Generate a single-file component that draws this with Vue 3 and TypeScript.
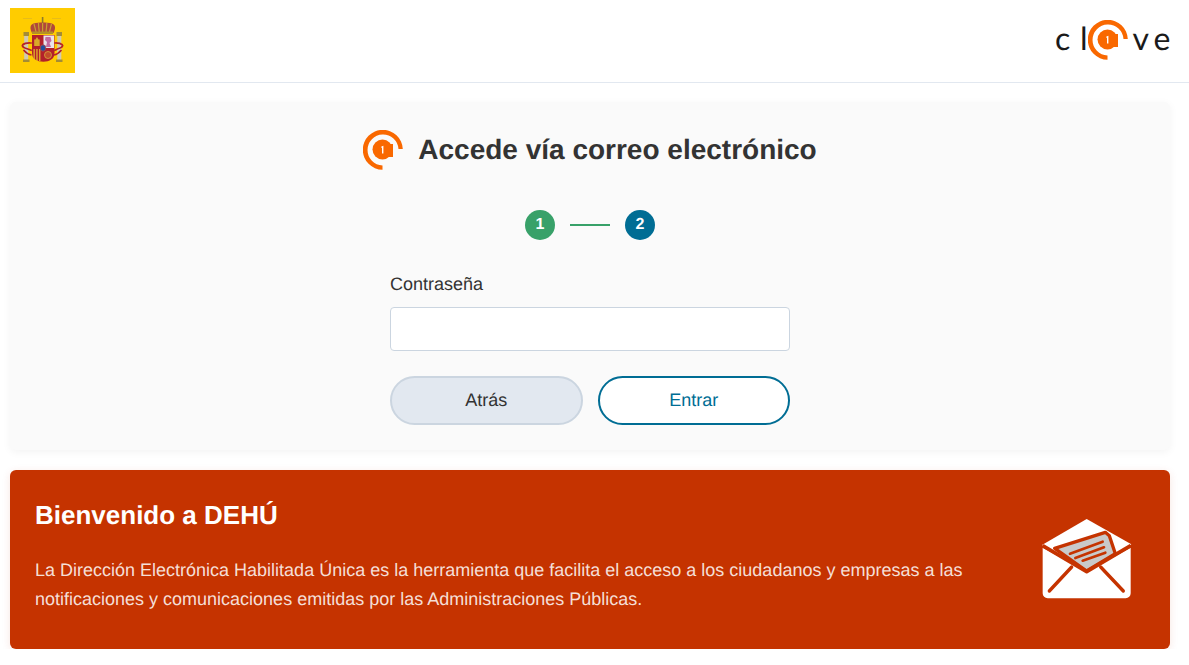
<script setup lang="ts">
const title: string = 'Accede vía correo electrónico'
</script>

<template>
  <div class="page">
    <header class="top">
      <div class="flag">
        <svg class="arms" viewBox="0 0 65 65" width="65" height="65" aria-hidden="true">
          <path d="M13 10.500h9M42 10.500h9" stroke="#c9a83a" stroke-width=".7" opacity=".6" />
          <path d="M32.600 9v6" stroke="#8d7a2c" stroke-width="1.600" />
          <path d="M22 25c-2-4-2.500-8 1.500-9.500 3-1 6-1 9-1s6.500 0 9.500 1c4 1.500 3.500 5.500 1.500 9.500z" fill="#b0483a" />
          <path d="M24 16c.8 3 1.500 5 2 8M32.600 15v9M41.500 16c-.8 3-1.500 5-2 8M28.500 15c0 3 .4 6 .8 9M36.800 15c0 3-.4 6-.8 9" stroke="#c9a030" stroke-width="1.200" fill="none" />
          <path d="M22 23.500h21v2.500H22z" fill="#b39026" />
          <rect x="14.200" y="28" width="4" height="24" fill="#cfcab4" />
          <rect x="47.300" y="28" width="4" height="24" fill="#cfcab4" />
          <path d="M13.500 24h5.500v4h-5.500zM46.500 24h5.500v4h-5.500zM13 51.500h6.500v2.500H13zM46 51.500h6.500v2.500H46z" fill="#a48c35" />
          <path d="M12.300 37c3-2.500 6-2 9.500-2M12.300 37c0 2.500 2 3 4 3.500s4 1.500 5.500 2M13.500 42c2.500 3 5 4.500 8 5M52.700 37c-3-2.500-6-2-8.500-2M52.700 37c0 2.500-2 3-4 3.500s-3 1.500-4.500 2M51.500 42c-2.500 3-4.500 4.500-7.500 5" stroke="#b5232a" stroke-width="1.700" fill="none" />
          <path d="M22 27h22.500v18c0 6-5 8.700-11.200 8.700S22 51 22 45z" fill="#b3202a" />
          <rect x="33.500" y="27.500" width="10.500" height="12.500" fill="#e9e3ea" />
          <path d="M35.500 29h5l1 4-2 2 1.500 4h-5l1-5-2-2z" fill="#c16aa0" />
          <path d="M27 29l1.500 2.500h1.200v6.500h-5.500v-6.500h1.200z" fill="#d9a928" />
          <g fill="#e2b52c">
            <rect x="23.500" y="41" width="1.300" height="10" />
            <rect x="26.300" y="41" width="1.300" height="12" />
            <rect x="29.100" y="41" width="1.300" height="12" />
          </g>
          <circle cx="38" cy="47" r="3.500" fill="#c34a2a" stroke="#d7aa38" stroke-width=".8" />
          <ellipse cx="33" cy="40" rx="2.800" ry="3.200" fill="#214f9d" stroke="#b24742" stroke-width=".8" />
        </svg>
      </div>
      <div class="brand">
        <span class="ch c1">c</span>
        <span class="ch c2">l</span>
        <svg class="mark" viewBox="0 0 40 40" width="40" height="40" aria-hidden="true">
          <path d="M39.800 19H35.500A15.500 15.500 0 1 0 19.500 35.500V39.800A20 20 0 1 1 39.800 19z" fill="#f96800" />
          <circle cx="19.500" cy="19.500" r="10" fill="#f96800" />
          <rect x="19.500" y="14" width="10.500" height="13" fill="#f96800" />
          <path d="M18.400 16.500l2-.8v7.800h-1.400v-5.700l-.6.200z" fill="#fff" />
        </svg>
        <span class="ch c3">v</span>
        <span class="ch c4">e</span>
      </div>
    </header>

    <main class="content">
      <section class="card">
        <div class="heading">
          <svg class="mark" viewBox="0 0 40 40" width="40" height="40" aria-hidden="true">
            <path d="M39.800 19H35.500A15.500 15.500 0 1 0 19.500 35.500V39.800A20 20 0 1 1 39.800 19z" fill="#f96800" />
            <circle cx="19.500" cy="19.500" r="10" fill="#f96800" />
            <rect x="19.500" y="14" width="10.500" height="13" fill="#f96800" />
            <path d="M18.400 16.500l2-.8v7.800h-1.400v-5.700l-.6.200z" fill="#fff" />
          </svg>
          <h1>{{ title }}</h1>
        </div>

        <div class="steps">
          <span class="dot done">1</span>
          <span class="link"></span>
          <span class="dot current">2</span>
        </div>

        <form class="form" @submit.prevent>
          <label for="pw">Contraseña</label>
          <input id="pw" type="password" />
          <div class="actions">
            <button type="button" class="btn back">Atrás</button>
            <button type="submit" class="btn go">Entrar</button>
          </div>
        </form>
      </section>

      <section class="banner">
        <div class="copy">
          <h2>Bienvenido a DEHÚ</h2>
          <p>La Dirección Electrónica Habilitada Única es la herramienta que facilita el acceso a los ciudadanos y empresas a las notificaciones y comunicaciones emitidas por las Administraciones Públicas.</p>
        </div>
        <svg class="mail" viewBox="0 0 390 315" width="130" height="105" aria-hidden="true">
          <path d="M200 42L334 118 200 196 66 120z" fill="#fff" />
          <path d="M68 128L200 200 332 128V265a15 15 0 0 1-15 15H83a15 15 0 0 1-15-15z" fill="#fff" />
          <path d="M104 130L256 82 268 92 286 146 200 198z" fill="#c9c9c9" stroke="#c53300" stroke-width="10" stroke-linejoin="round" />
          <path d="M68 122L200 200 332 122" fill="none" stroke="#c53300" stroke-width="11" stroke-linejoin="round" />
          <path d="M155 186L88 258M242 186L310 258" stroke="#c53300" stroke-width="10" stroke-linecap="round" />
          <path d="M150 146L248 110M166 159L252 127M188 167L256 143" stroke="#c53300" stroke-width="8" stroke-linecap="round" />
        </svg>
      </section>
    </main>
  </div>
</template>

<style>
html, body { margin: 0; background: #fff; }
</style>

<style scoped>
.page {
  font-family: "Liberation Sans", Arial, sans-serif;
  color: #333;
  text-rendering: geometricPrecision;
}
.top {
  display: flex;
  justify-content: space-between;
  align-items: flex-start;
  height: 82px;
  padding: 0 19px 0 10px;
  border-bottom: 1px solid #e2e8f0;
}
.flag {
  width: 65px;
  height: 65px;
  margin-top: 8px;
  background: #ffcc00;
}
.arms { display: block; filter: blur(0.35px); }
.brand {
  display: flex;
  align-items: flex-start;
  width: 115px;
  margin-top: 20px;
  height: 40px;
  font-family: Lato, "Open Sans", sans-serif;
  font-weight: 400;
  font-size: 32px;
  line-height: 36px;
  color: #1a1a1a;
}
.ch { display: block; }
.c1 { width: 14px; }
.c2 { margin-left: 11px; width: 8px; }
.c3 { margin-left: 5px; width: 15px; }
.c4 { margin-left: 6px; }
.mark { display: block; flex: none; }
.content { padding: 19px 19px 0 10px; }
.card {
  height: 348px;
  box-sizing: border-box;
  padding-top: 28px;
  background: #fafafa;
  border-radius: 6px;
  box-shadow: 0 2px 8px rgba(0, 0, 0, 0.05);
}
.heading {
  display: flex;
  justify-content: center;
  align-items: center;
  gap: 15px;
}
h1 {
  margin: 0;
  font-size: 28px;
  line-height: 40px;
  font-weight: 700;
  color: #333;
}
.steps {
  display: flex;
  justify-content: center;
  align-items: center;
  gap: 15px;
  margin-top: 40px;
}
.dot {
  width: 30px;
  height: 30px;
  border-radius: 50%;
  color: #fff;
  font-weight: 700;
  font-size: 16px;
  line-height: 30px;
  text-align: center;
}
.done { background: #38a169; }
.current { background: #006d94; }
.link { width: 40px; height: 2px; background: #38a169; }
.form {
  display: flex;
  flex-direction: column;
  width: 400px;
  margin: 33px auto 0;
}
label {
  font-size: 18px;
  line-height: 22px;
  margin-bottom: 12px;
  color: #333;
}
input {
  box-sizing: border-box;
  height: 44px;
  border: 1px solid #cbd5e0;
  border-radius: 4px;
  background: #fff;
  padding: 0 12px;
}
.actions {
  display: flex;
  gap: 15px;
  margin-top: 25px;
}
.btn {
  flex: 1;
  height: 49px;
  border-radius: 25px;
  font-family: inherit;
  font-size: 18px;
  padding: 0;
  text-rendering: inherit;
}
.back {
  background: #e2e8f0;
  border: 2px solid #cbd5e0;
  color: #333;
}
.go {
  background: #fff;
  border: 2px solid #006d94;
  color: #006d94;
}
.banner {
  display: flex;
  align-items: center;
  justify-content: space-between;
  gap: 20px;
  margin-top: 20px;
  height: 179px;
  box-sizing: border-box;
  padding: 0 20px 0 25px;
  background: #c53300;
  border-radius: 6px;
  box-shadow: 0 2px 8px rgba(197, 51, 0, 0.12);
  color: #fff;
}
.copy { flex: 1; align-self: flex-start; padding-top: 25px; }
h2 {
  margin: 0;
  font-size: 26px;
  line-height: 40px;
  font-weight: 700;
}
p {
  margin: 21px 0 0;
  font-size: 18px;
  line-height: 29px;
  color: rgba(255, 255, 255, 0.85);
}
.mail { display: block; flex: none; margin-top: -4px; }
</style>
